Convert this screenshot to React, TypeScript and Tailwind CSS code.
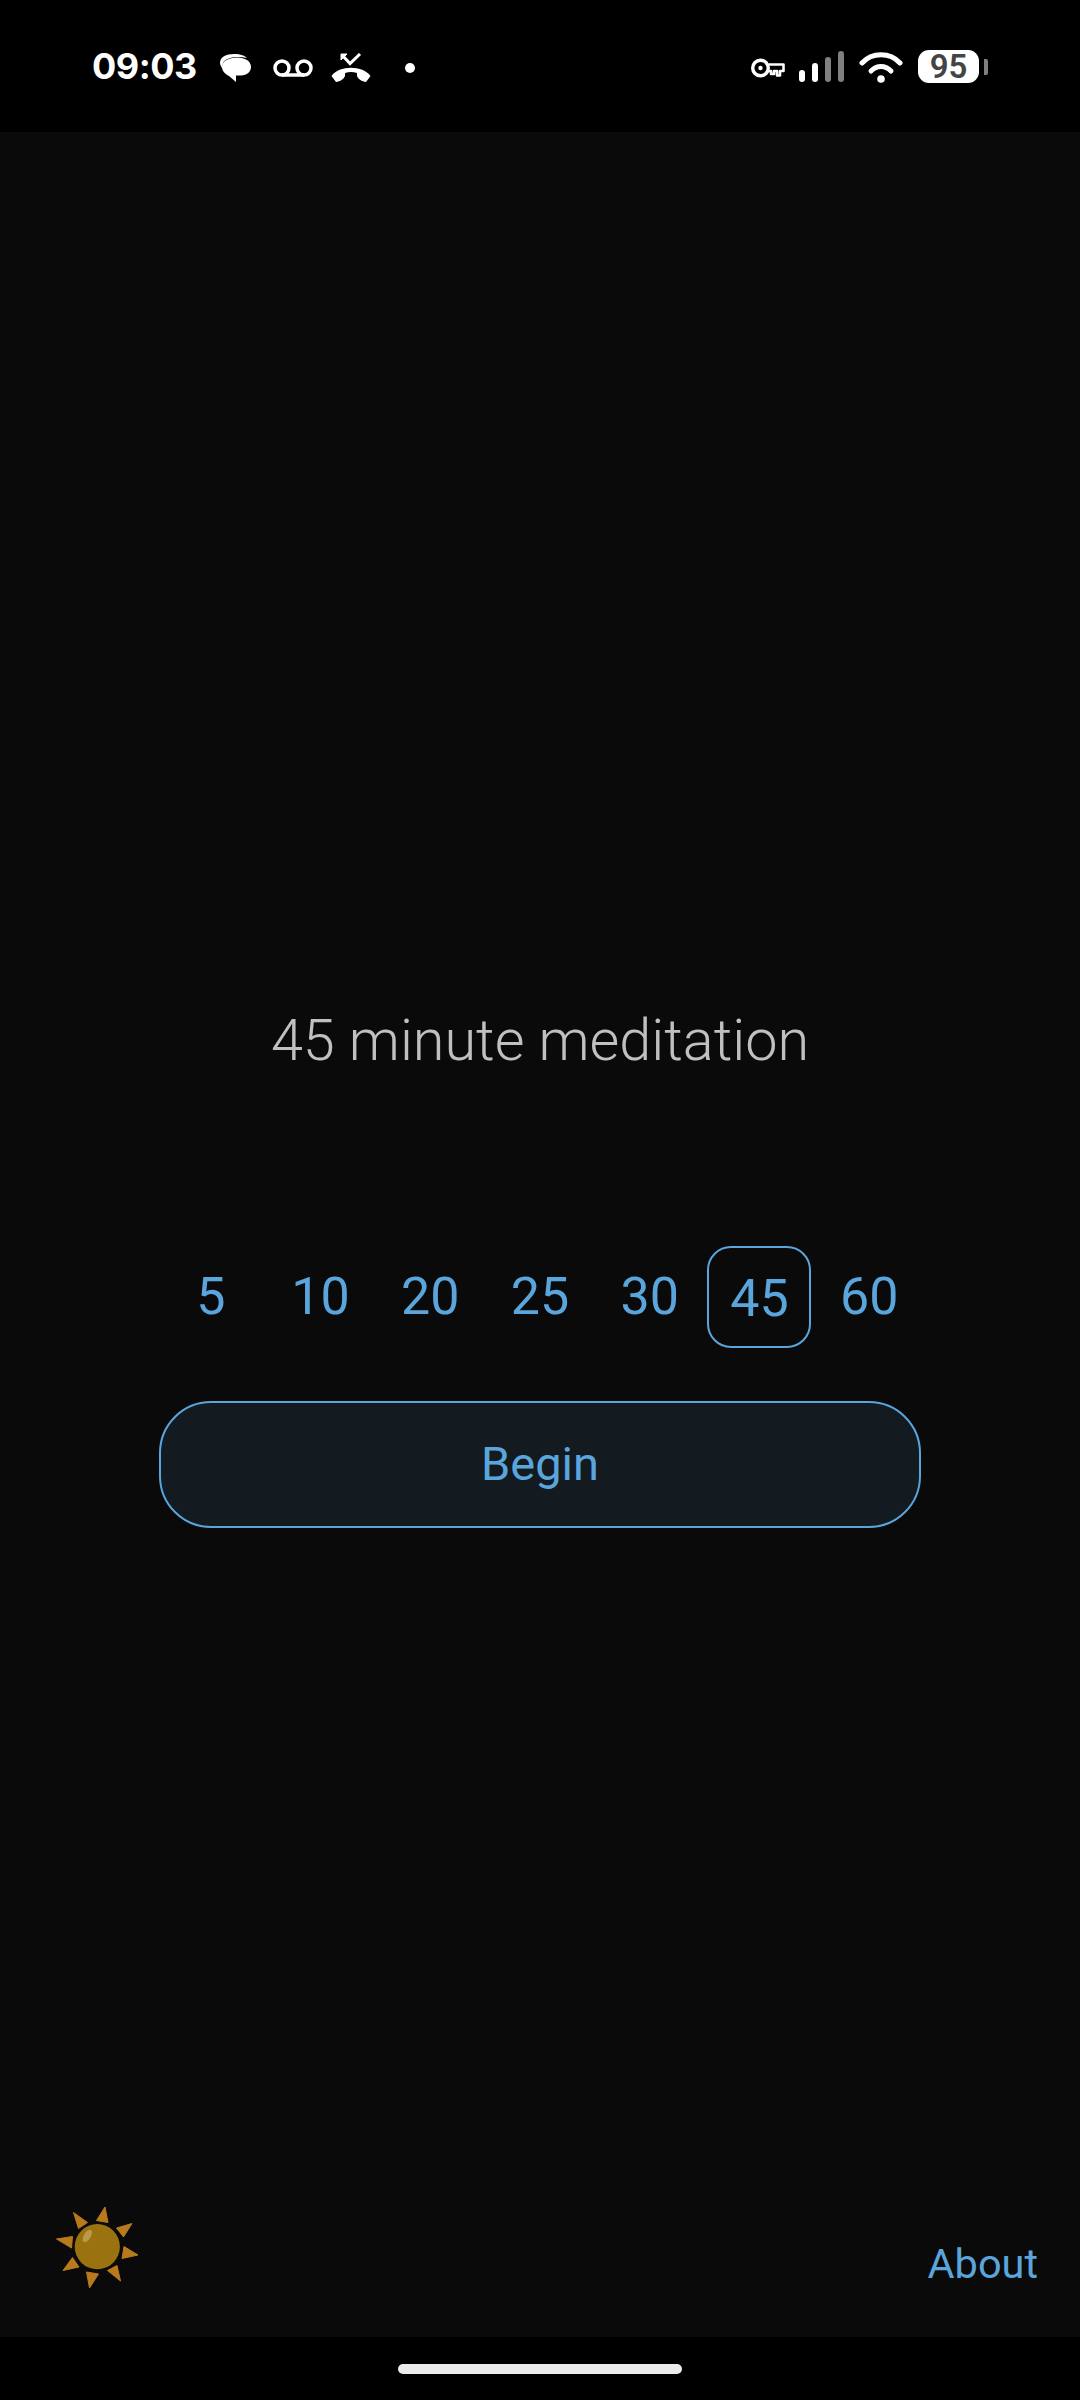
const durations = [5, 10, 20, 25, 30, 45, 60];

function Sun() {
  return (
    <svg width="95" height="95" viewBox="30 20 95 95" className="block">
      <g fill="#b87a1c" stroke="#b87a1c" strokeWidth="1" strokeLinejoin="round">
        <path d="M85 27 L88 42.5 L76.5 40.5 Z" />
        <path d="M53.5 32.5 L67.5 42.5 L58.5 48.5 Z" />
        <path d="M112 43.5 L96.5 48 L103.5 57 Z" />
        <path d="M36.5 59 L52.5 56.5 L51.5 68 Z" />
        <path d="M118 75 L104 66.5 L102 78.5 Z" />
        <path d="M43 90.5 L52.5 77.5 L59 87 Z" />
        <path d="M100.5 101 L87.5 90.5 L97 85.5 Z" />
        <path d="M69.5 108 L66.5 92 L78.5 94 Z" />
      </g>
      <circle cx="77.3" cy="66.7" r="22.6" fill="#9a7210" />
      <ellipse cx="67.3" cy="56" rx="3.5" ry="7" fill="#b89a48" transform="rotate(30 67.3 56)" />
    </svg>
  );
}

function StatusIcons() {
  return (
    <div className="mt-[4px] flex items-center">
      <svg width="32" height="30" viewBox="0 0 32 30" className="ml-[23px] block">
        <path d="M0 10 C0 4 6 1 14 1 C21 1 25 3 27 5 C18 3 6 4 3 10 L2 15 C1 13 0 12 0 10 Z" fill="#fff" />
        <path d="M2 14 C2 8 9 4.5 17 4.5 C25 4.5 31 8 31 14 C31 19 27 22 21 22.5 L16 22.5 L16 29 L9 23 C5 21 2 18 2 14 Z" fill="#fff" />
      </svg>
      <svg width="40" height="18" viewBox="0 0 40 18" className="ml-[21px] block">
        <g fill="none" stroke="#fff" strokeWidth="3.5">
          <circle cx="9" cy="9" r="7" />
          <circle cx="31" cy="9" r="7" />
          <path d="M9 16 H31" />
        </g>
      </svg>
      <svg width="40" height="30" viewBox="0 0 40 30" className="ml-[18px] block">
        <path d="M10 1 H16 L10 7 Z" fill="#fff" stroke="#fff" strokeWidth="1" />
        <path d="M11 2 L19 10.5 L29 1" fill="none" stroke="#fff" strokeWidth="3" />
        <path d="M0.5 23 C8 12 32 12 39.5 23 L35 29 C31 28.5 27 26 26 23 L26 20 C22 18.5 18 18.5 14 20 L14 23 C13 26 9 28.5 5 29 Z" fill="#fff" />
      </svg>
      <span className="ml-[34px] block h-[10px] w-[10px] rounded-full bg-white" />
    </div>
  );
}

function StatusRight() {
  return (
    <div className="mt-[1px] flex items-center">
      <svg width="34" height="20" viewBox="0 0 34 20" className="mt-[2px] block">
        <circle cx="9.5" cy="10" r="7.8" fill="none" stroke="#fff" strokeWidth="3.4" />
        <circle cx="9.5" cy="10" r="2.2" fill="#fff" />
        <path d="M18 6.5 H32.5 V13 H29 V17.5 H26 V13 H23 V16 H20 V13 H18" fill="none" stroke="#fff" strokeWidth="2.6" strokeLinejoin="round" />
      </svg>
      <div className="ml-[14px] flex items-end gap-[7px]">
        <span className="h-[12px] w-[6px] rounded-full bg-white" />
        <span className="h-[19px] w-[6px] rounded-full bg-white" />
        <span className="h-[25px] w-[6px] rounded-full bg-[#808080]" />
        <span className="h-[31px] w-[6px] rounded-full bg-[#808080]" />
      </div>
      <svg width="44" height="32" viewBox="0 0 44 32" className="ml-[15px] block">
        <g fill="none" stroke="#fff" strokeWidth="5" strokeLinecap="round">
          <path d="M3 12 C13 1 31 1 41 12" />
          <path d="M12 20 C18 14 26 14 32 20" />
        </g>
        <circle cx="22" cy="28" r="3.8" fill="#fff" />
      </svg>
      <div className="ml-[15px] flex h-[33px] w-[61px] items-center justify-center rounded-[11px] bg-white">
        <span className="text-[33px] leading-none font-semibold text-[#444444]">95</span>
      </div>
      <span className="ml-[5px] h-[16px] w-[4px] rounded-r-[2px] bg-[#808080]" />
    </div>
  );
}

export default function App() {
  return (
    <div className="flex h-[2400px] w-[1080px] flex-col bg-black font-['Roboto',sans-serif]">
      {/* Status bar */}
      <div className="flex h-[132px] items-center justify-between pr-[92px] pl-[92px]">
        <div className="flex items-center">
          <span className="font-['Inter',sans-serif] text-[36px] leading-none font-bold tracking-[-0.5px] text-white">09:03</span>
          <StatusIcons />
        </div>
        <StatusRight />
      </div>

      <div className="flex flex-1 flex-col items-center bg-[#0a0a0a]">
        <h1 className="mt-[873px] text-[57.6px] leading-[72px] font-light text-[#c0c0c0]">45 minute meditation</h1>

        <div className="mt-[169px] flex w-[768px]">
          {durations.map((d) => (
            <div key={d} className="flex h-[102px] flex-1 items-center justify-center">
              <span
                className={
                  d === 45
                    ? "flex h-[102px] w-[104px] items-center justify-center rounded-[24px] border-2 border-[#5aa5dc] pt-[4px] text-[52px] leading-none text-[#5aa5dc]"
                    : "text-[52px] leading-none text-[#5aa5dc]"
                }
              >
                {d}
              </span>
            </div>
          ))}
        </div>

        <button className="mt-[53px] h-[127px] w-[762px] rounded-[52px] border-2 border-[#5aa5dc] bg-[#131a20] text-[47px] text-[#5aa5dc]">
          Begin
        </button>

        <div className="mt-auto flex w-full items-end justify-between pr-[42px] pb-[42px] pl-[50px]">
          <Sun />
          <span className="mb-[6px] text-[41.5px] leading-[50px] text-[#5aa5dc]">About</span>
        </div>
      </div>

      {/* Gesture bar */}
      <div className="flex h-[63px] items-start justify-center bg-black pt-[27px]">
        <span className="h-[10px] w-[284px] rounded-full bg-[#ececec]" />
      </div>
    </div>
  );
}
